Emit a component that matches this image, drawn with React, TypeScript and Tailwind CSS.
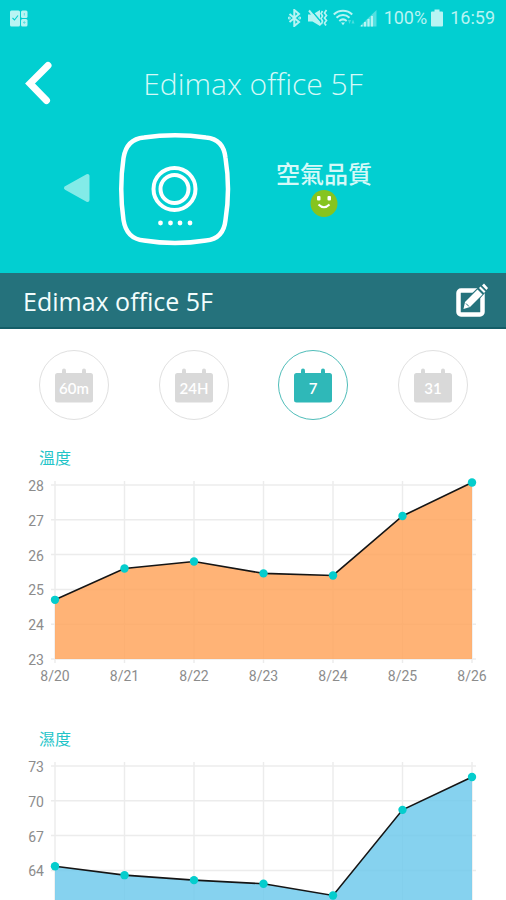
type Series = {
  title: string;
  fill: string;
  ticks: number[];
  values: number[];
};

const DAYS = ["8/20", "8/21", "8/22", "8/23", "8/24", "8/25", "8/26"];

const SERIES: Series[] = [
  {
    title: "溫度",
    fill: "#ffa35a",
    ticks: [28, 27, 26, 25, 24, 23],
    values: [24.7, 25.6, 25.8, 25.46, 25.4, 27.11, 28.07],
  },
  {
    title: "濕度",
    fill: "#6dc9ec",
    ticks: [73, 70, 67, 64, 61, 58],
    values: [64.36, 63.59, 63.16, 62.85, 61.84, 69.22, 72.05],
  },
];

const RANGES = [
  { id: "60m", active: false },
  { id: "24H", active: false },
  { id: "7", active: true },
  { id: "31", active: false },
];

const LEFT = 55;
const RIGHT = 472;
const TOP = 15;
const BASE = 189;

function AreaChart({ title, fill, ticks, values }: Series) {
  const max = ticks[0];
  const min = ticks[ticks.length - 1];
  const x = (i: number) => LEFT + ((RIGHT - LEFT) * i) / (values.length - 1);
  const y = (v: number) => BASE - ((BASE - TOP) * (v - min)) / (max - min);
  const points = values.map((v, i) => `${x(i)},${y(v)}`).join(" ");

  return (
    <section className="pb-7">
      <h2 className="pl-[39px] text-base leading-6 text-[#22c4c8]">{title}</h2>
      <svg viewBox="0 0 506 229" className="block w-full" role="img" aria-label={title}>
        <g stroke="#ececec" strokeWidth="1.5">
          {ticks.map((t) => (
            <line key={t} x1={LEFT - 4} x2={RIGHT + 4} y1={y(t)} y2={y(t)} />
          ))}
          {DAYS.map((d, i) => (
            <line key={d} x1={x(i)} x2={x(i)} y1={TOP - 4} y2={BASE + 4} />
          ))}
        </g>
        <polygon points={`${LEFT},${BASE} ${points} ${RIGHT},${BASE}`} fill={fill} fillOpacity="0.83" />
        <polyline points={points} fill="none" stroke="#151515" strokeWidth="1.6" />
        {values.map((v, i) => (
          <circle key={i} cx={x(i)} cy={y(v)} r="4.2" fill="#05cdcd" />
        ))}
        <g className="fill-[#8c8c8c] font-[Roboto,sans-serif] text-[14px]">
          {ticks.map((t) => (
            <text key={t} x="44" y={y(t) + 6} textAnchor="end">
              {t}
            </text>
          ))}
          {DAYS.map((d, i) => (
            <text key={d} x={x(i)} y="211" textAnchor="middle">
              {d}
            </text>
          ))}
        </g>
      </svg>
    </section>
  );
}

function RangeButton({ id, active }: { id: string; active: boolean }) {
  return (
    <button
      type="button"
      aria-pressed={active}
      className={
        active
          ? "grid size-[70px] place-items-center rounded-full border border-[#4fbdb9] text-[#2fb8b8]"
          : "grid size-[70px] place-items-center rounded-full border border-[#e0e0e0] text-[#d9d9d9]"
      }
    >
      <svg width="38" height="36" viewBox="0 0 38 36">
        <rect x="0" y="6" width="38" height="29.5" rx="2.5" fill="currentColor" />
        <rect x="7" y="1.5" width="4" height="8" rx="2" fill="currentColor" />
        <rect x="27" y="1.5" width="4" height="8" rx="2" fill="currentColor" />
        <text
          x="19"
          y="27"
          textAnchor="middle"
          fill="#fff"
          className="font-[Lato,sans-serif] text-[15px] font-semibold"
        >
          {id}
        </text>
      </svg>
    </button>
  );
}

function StatusBar() {
  return (
    <div className="flex h-9 items-center justify-between pr-[11px] pl-[10px] font-[Roboto,sans-serif] text-lg text-[#b8f4f3]">
      <svg width="18" height="17" viewBox="0 0 18 17" fill="currentColor">
        <rect width="10" height="16" y="0.5" rx="1.5" />
        <rect x="11" y="0.5" width="6.5" height="7.5" rx="1.5" />
        <rect x="11" y="9" width="6.5" height="7.5" rx="1.5" />
        <path d="M2.500 8l2 2 3.500-4.500" fill="none" stroke="#02cfd1" strokeWidth="1.1" />
        <path d="M14.300 3v2.500M13 12.500h2.600M14.300 11.200v2.600" stroke="#5fe0df" />
      </svg>
      <div className="flex items-center">
        <svg width="13" height="18" viewBox="0 0 13 18" className="mr-[7px]" fill="none" stroke="currentColor" strokeWidth="2">
          <path d="M1.500 5l9.500 8-4.700 4V1l4.700 4-9.500 8" />
          <circle cx="1.200" cy="9" r="0.500" />
          <circle cx="11.800" cy="9" r="0.500" />
        </svg>
        <svg width="20" height="18" viewBox="0 0 20 18" className="mr-[5px]" fill="currentColor">
          <path d="M0 5.500h4.500L12 1v16l-7.500-4.500H0z" />
          <path d="M2.500 0.500L14 14" stroke="#02cfd1" strokeWidth="1.500" />
          <path d="M1 1.500l12 14.500" stroke="currentColor" strokeWidth="2" />
          <path d="M14.500 2l-1.500 2.500L14.500 7 13 9.500l1.500 2.500-1 3M18.500 1l-2 3 2 2.500-2 2.500 2 2.500-2 2.500 1.500 2.500" fill="none" stroke="currentColor" strokeWidth="1.700" />
        </svg>
        <svg width="22" height="18" viewBox="0 0 22 18" className="mr-1" fill="none" stroke="currentColor" strokeWidth="2">
          <path d="M0.800 5.500c5-5 13.400-5 18.400 0M3.500 8.800c3.800-3.600 9.200-3.600 13 0M6.300 12c2.300-2 5.100-2 7.400 0" />
          <path d="M8 13.500h4l-2 2.800z" fill="currentColor" stroke="none" />
          <path d="M15 11h3l-1.500 4zM18.500 14.500h3l-1.500-4z" fill="currentColor" stroke="none" opacity="0.400" />
        </svg>
        <svg width="18" height="18" viewBox="0 0 18 18" className="mr-[7px]" fill="currentColor">
          <path d="M17.500 1v16.500H0.500z" opacity="0.450" />
          <path d="M2 16h1.500v1.500H2zM5 13h2v4.500H5zM8.500 10h2v7.500h-2zM12 7h2v10.500h-2z" />
        </svg>
        <span>100%</span>
        <svg width="12" height="18" viewBox="0 0 12 18" className="mr-[7px] ml-1" fill="currentColor">
          <path d="M3.500 0.500h5v2H11q1 0 1 1V16.500q0 1-1 1H1q-1 0-1-1V3.500q0-1 1-1h2.500z" />
        </svg>
        <span>16:59</span>
      </div>
    </div>
  );
}

export default function App() {
  return (
    <div className="h-screen overflow-y-auto bg-white font-['Open_Sans','Noto_Sans_CJK_TC',sans-serif] [scrollbar-width:none]">
      <header className="bg-[#02cfd1] pb-[27px]">
        <StatusBar />
        <div className="grid grid-cols-[80px_1fr_80px] items-center">
          <button type="button" aria-label="Back" className="pl-[25px]">
            <svg width="28" height="46" viewBox="0 0 28 46" fill="none" stroke="#fff" strokeWidth="7" strokeLinecap="round" strokeLinejoin="miter">
              <path d="M23 4.500L5 22.500 21.500 39.500" />
            </svg>
          </button>
          <h1 className="text-center text-[30px] leading-[96px] font-light text-[#d4f9f8]">Edimax office 5F</h1>
        </div>
        <div className="flex items-start pl-[63px]">
          <button type="button" aria-label="Previous device" className="mt-[41px] mr-[28px]">
            <svg width="27" height="30" viewBox="0 0 27 30" fill="#83ebe8" stroke="#83ebe8" strokeWidth="4" strokeLinejoin="round">
              <path d="M3 15L24.500 3v24z" />
            </svg>
          </button>
          <svg width="114" height="114" viewBox="0 0 114 114" fill="none" stroke="#fff">
            <path
              d="M26 5.500Q57 1 88 5.500Q105.500 7 107.500 26Q112.500 57 107.500 88Q105.500 107 88 108.500Q57 113.500 26 108.500Q8.500 107 5.500 88Q1 57 5.500 26Q8.500 7 26 5.500Z"
              strokeWidth="4.500"
            />
            <circle cx="56.500" cy="57" r="21" strokeWidth="4" />
            <circle cx="56.500" cy="57" r="14" strokeWidth="4" />
            <g fill="#fff" stroke="none">
              <circle cx="42.500" cy="91" r="2.400" />
              <circle cx="52.500" cy="91" r="2.400" />
              <circle cx="62" cy="91" r="2.400" />
              <circle cx="72" cy="91" r="2.400" />
            </g>
          </svg>
          <div className="mt-[26px] ml-[44px] flex flex-col items-center">
            <p className="text-2xl leading-8 font-medium text-[#d4f9f8]">空氣品質</p>
            <svg width="28" height="28" viewBox="0 0 28 28">
              <circle cx="14" cy="13.500" r="13.500" fill="#86c41f" />
              <rect x="7" y="6" width="3.500" height="4.500" rx="1" fill="#fff" />
              <rect x="17.500" y="6" width="3.500" height="4.500" rx="1" fill="#fff" />
              <path d="M8.500 14.500q5.500 5.500 11 0" fill="none" stroke="#fff" strokeWidth="2" />
            </svg>
          </div>
        </div>
      </header>

      <div className="flex h-14 items-center justify-between border-b-2 border-[#145e68] bg-[#25727c] pr-[18px] pl-[23px]">
        <p className="pt-0.5 text-[25px] leading-8 text-[#f2fdfd]">Edimax office 5F</p>
        <button type="button" aria-label="Edit">
          <svg width="33" height="34" viewBox="0 0 33 34" fill="none">
            <rect x="3.500" y="7.500" width="24" height="24" rx="2.500" stroke="#fff" strokeWidth="4.500" />
            <path d="M9 25l1.500-6L28 1.500l4 4L15 24z" fill="#25727c" stroke="#25727c" strokeWidth="3" />
            <path d="M8.500 26l1.500-7L22.500 6.500l5 5L15 24z" fill="#fff" />
            <path d="M24 5l1.500-1.500 5 5L29 10zM27 2.500L29 0.500l4 4.500-1.500 2z" fill="#fff" />
            <path d="M11 20.500l3 3" stroke="#25727c" />
          </svg>
        </button>
      </div>

      <main>
        <div className="flex justify-between pt-[21px] pr-[38px] pb-[26px] pl-[39px]">
          {RANGES.map((r) => (
            <RangeButton key={r.id} {...r} />
          ))}
        </div>
        {SERIES.map((s) => (
          <AreaChart key={s.title} {...s} />
        ))}
      </main>
    </div>
  );
}
